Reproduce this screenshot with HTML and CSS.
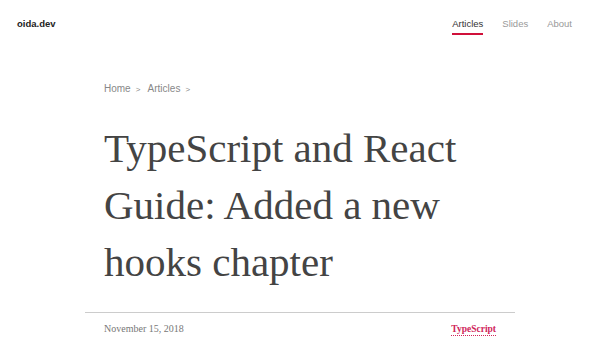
FILE: index.html
```html
<!DOCTYPE html>
<html lang="en">
<head>
  <meta charset="UTF-8" />
  <meta name="viewport" content="width=device-width, initial-scale=1.0" />
  <title>TypeScript and React Guide: Added a new hooks chapter</title>
  <link rel="stylesheet" href="styles.css">
</head>
<body>
  <header class="site-header">
    <a class="logo" href="#">oida.dev</a>
    <nav class="main-nav">
      <a href="#" class="active">Articles</a>
      <a href="#">Slides</a>
      <a href="#">About</a>
    </nav>
  </header>

  <main class="article">
    <div class="article-head">
      <!-- Breadcrumbs -->
      <nav class="breadcrumbs">
        <a href="#">Home</a><span class="sep">&gt;</span>
        <a href="#">Articles</a><span class="sep">&gt;</span>
      </nav>
      <h1 class="title">TypeScript and React Guide: Added a new hooks chapter</h1>
    </div>
    <div class="meta">
      <time datetime="2018-11-15">November 15, 2018</time>
      <a href="#" class="tag">TypeScript</a>
    </div>
  </main>
</body>
</html>
```

FILE: styles.css
```css
* { box-sizing: border-box; }
body {
  margin: 0;
  padding: 0;
  background: #fff;
  color: #333;
  font-family: 'Liberation Sans', Arial, sans-serif;
}
a {
  color: inherit;
  text-decoration: none;
}
/* Header */
.site-header {
  display: flex;
  justify-content: space-between;
  align-items: flex-start;
  padding: 18px 28px 0 17px;
  height: 60px;
}
.logo {
  font-size: 9.5px;
  font-weight: bold;
  color: #222;
}
.main-nav {
  display: flex;
  gap: 19px;
}
.main-nav a {
  display: block;
  font-size: 9.5px;
  color: #999;
  padding-bottom: 4px;
  border-bottom: 2px solid transparent;
}
.main-nav a.active {
  color: #333;
  border-bottom-color: #d0103a;
}
/* Article */
.article {
  width: 430px;
  margin: 0 auto;
}
.article-head {
  padding: 23px 19px 0;
  border-bottom: 1px solid #ccc;
}
.breadcrumbs {
  font-size: 10px;
  color: #888;
  margin-bottom: 26px;
}
.breadcrumbs .sep {
  margin: 0 5px;
  font-size: 8px;
}
.title {
  font-family: 'Liberation Serif', 'Times New Roman', serif;
  font-weight: normal;
  font-size: 41px;
  line-height: 57px;
  color: #444;
  margin: 0 0 21px;
}
.meta {
  display: flex;
  justify-content: space-between;
  align-items: flex-start;
  padding: 10px 19px 0;
  font-family: 'Liberation Serif', 'Times New Roman', serif;
  font-size: 10px;
  color: #777;
}
.tag {
  color: #d0245a;
  font-weight: bold;
  font-size: 9.5px;
  border-bottom: 1px dotted #d0245a;
  line-height: 12px;
}
```
